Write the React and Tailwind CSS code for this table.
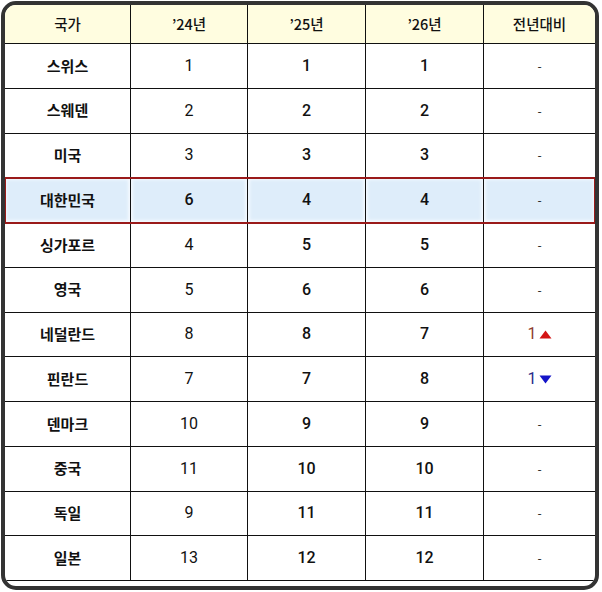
import React from "react";

const rows = [
  { name: "스위스", a: "1", b: "1", c: "1" },
  { name: "스웨덴", a: "2", b: "2", c: "2" },
  { name: "미국", a: "3", b: "3", c: "3" },
  { name: "대한민국", a: "6", b: "4", c: "4", hl: true },
  { name: "싱가포르", a: "4", b: "5", c: "5" },
  { name: "영국", a: "5", b: "6", c: "6" },
  { name: "네덜란드", a: "8", b: "8", c: "7", diff: "up" },
  { name: "핀란드", a: "7", b: "7", c: "8", diff: "down" },
  { name: "덴마크", a: "10", b: "9", c: "9" },
  { name: "중국", a: "11", b: "10", c: "10" },
  { name: "독일", a: "9", b: "11", c: "11" },
  { name: "일본", a: "13", b: "12", c: "12" },
];

const cols = "grid grid-cols-[126px_117px_118px_118px_1fr]";
const num = "font-['Roboto','Liberation_Sans',sans-serif] text-[16px]";

function Diff({ type }) {
  if (type === "up") {
    return (
      <span className={`flex items-center gap-[2px] ${num}`}>
        <span className="text-[#8e3b30]">1</span>
        <svg width="13" height="9" viewBox="0 0 13 9">
          <path d="M6.5 0.5L12.5 8.5H0.5Z" fill="#d41414" />
        </svg>
      </span>
    );
  }
  if (type === "down") {
    return (
      <span className={`flex items-center gap-[2px] ${num}`}>
        <span className="text-[#2a2a8a]">1</span>
        <svg width="13" height="9" viewBox="0 0 13 9">
          <path d="M0.5 0.5H12.5L6.5 8.5Z" fill="#1414c8" />
        </svg>
      </span>
    );
  }
  return <span className="text-[12px]">-</span>;
}

function Cell({ children, last, hl, className = "" }) {
  return (
    <div
      className={`flex items-center justify-center ${last ? "" : "border-r border-[#111]"} ${
        hl ? "bg-[#deedfa] shadow-[inset_0_0_3px_2px_#f4f9fe]" : ""
      } ${className}`}
    >
      {children}
    </div>
  );
}

export default function App() {
  return (
    <div className="w-[602px] h-[592px] bg-white p-[1px]">
      <div
        className="w-[598px] h-[589px] border-4 border-[#333] rounded-[15px] overflow-hidden bg-white text-[#111]"
        style={{ fontFamily: '"Noto Sans CJK KR", "Noto Sans", sans-serif' }}
      >
        <div className={`${cols} h-[39px] bg-[#fffde0] border-b border-[#111] text-[14.5px] font-medium`}>
          <Cell>국가</Cell>
          <Cell>’24년</Cell>
          <Cell>’25년</Cell>
          <Cell>’26년</Cell>
          <Cell last>전년대비</Cell>
        </div>
        {rows.map((r) => (
          <div
            key={r.name}
            className={`${cols} h-[44.75px] border-b border-[#111] text-[15px] ${
              r.hl ? "outline-2 outline-[#9a1a1a] -outline-offset-1 relative" : ""
            }`}
          >
            <Cell hl={r.hl} className="font-bold">{r.name}</Cell>
            <Cell hl={r.hl} className={`${num} ${r.hl ? "font-medium" : "font-normal"}`}>{r.a}</Cell>
            <Cell hl={r.hl} className={`${num} font-medium`}>{r.b}</Cell>
            <Cell hl={r.hl} className={`${num} font-medium`}>{r.c}</Cell>
            <Cell hl={r.hl} last>
              <Diff type={r.diff} />
            </Cell>
          </div>
        ))}
      </div>
    </div>
  );
}
